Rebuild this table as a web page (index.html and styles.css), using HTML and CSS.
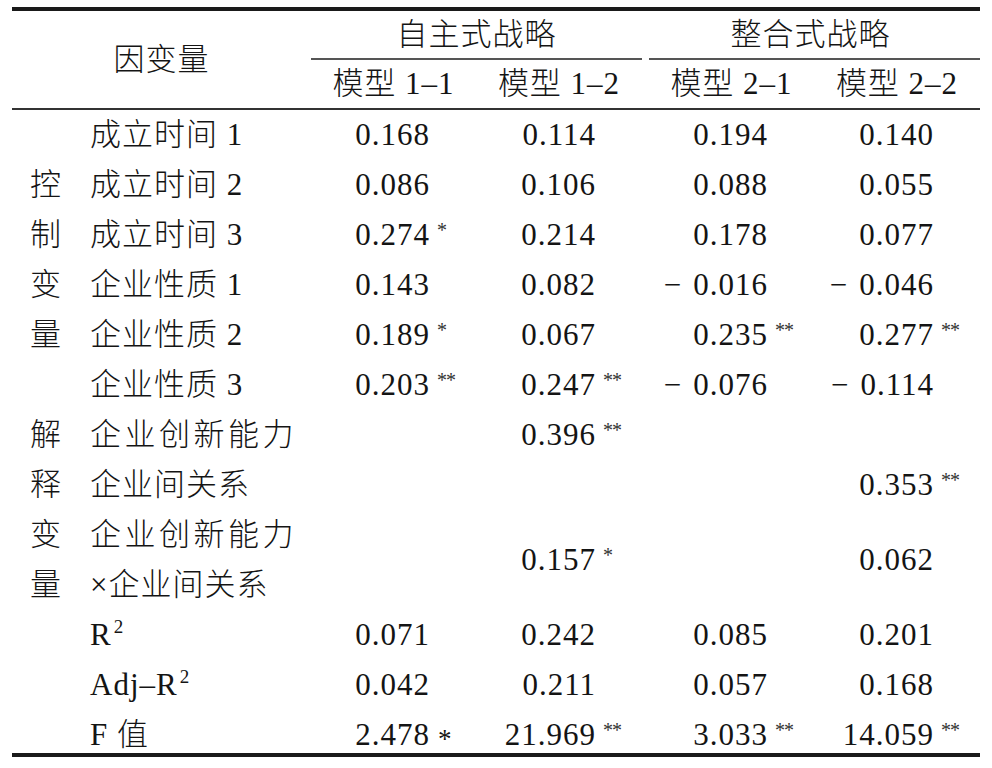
FILE: index.html
```html
<!DOCTYPE html>
<html lang="zh-CN">
<head>
<meta charset="utf-8">
<title>回归分析结果</title>
<link rel="stylesheet" href="styles.css">
</head>
<body>
<table class="reg">
  <colgroup>
    <col class="w-cat"><col class="w-lab"><col class="w-c1"><col class="w-c2"><col class="w-c3"><col class="w-c4">
  </colgroup>
  <thead>
    <tr>
      <th class="dep" rowspan="2" colspan="2">因变量</th>
      <th class="grp" colspan="2"><div class="grp-line">自主式战略</div></th>
      <th class="grp grp-b" colspan="2"><div class="grp-line">整合式战略</div></th>
    </tr>
    <tr>
      <th class="model">模型 1–1</th>
      <th class="model">模型 1–2</th>
      <th class="model model-3">模型 2–1</th>
      <th class="model">模型 2–2</th>
    </tr>
  </thead>
  <tbody>
    <tr>
      <td class="cat" rowspan="6">控<br>制<br>变<br>量</td>
      <td class="lab">成立时间 1</td>
      <td class="num">0.168</td><td class="num">0.114</td><td class="num">0.194</td><td class="num">0.140</td>
    </tr>
    <tr>
      <td class="lab">成立时间 2</td>
      <td class="num">0.086</td><td class="num">0.106</td><td class="num">0.088</td><td class="num">0.055</td>
    </tr>
    <tr>
      <td class="lab">成立时间 3</td>
      <td class="num">0.274<span class="sig"><sup>*</sup></span></td><td class="num">0.214</td><td class="num">0.178</td><td class="num">0.077</td>
    </tr>
    <tr>
      <td class="lab">企业性质 1</td>
      <td class="num">0.143</td><td class="num">0.082</td><td class="num"><span class="neg">−</span>0.016</td><td class="num"><span class="neg">−</span>0.046</td>
    </tr>
    <tr>
      <td class="lab">企业性质 2</td>
      <td class="num">0.189<span class="sig"><sup>*</sup></span></td><td class="num">0.067</td><td class="num">0.235<span class="sig"><sup>**</sup></span></td><td class="num">0.277<span class="sig"><sup>**</sup></span></td>
    </tr>
    <tr>
      <td class="lab">企业性质 3</td>
      <td class="num">0.203<span class="sig"><sup>**</sup></span></td><td class="num">0.247<span class="sig"><sup>**</sup></span></td><td class="num"><span class="neg">−</span>0.076</td><td class="num"><span class="neg">−</span>0.114</td>
    </tr>
    <tr>
      <td class="cat" rowspan="3">解<br>释<br>变<br>量</td>
      <td class="lab"><span class="wide">企业创新能力</span></td>
      <td class="num"></td><td class="num">0.396<span class="sig"><sup>**</sup></span></td><td class="num"></td><td class="num"></td>
    </tr>
    <tr>
      <td class="lab">企业间关系</td>
      <td class="num"></td><td class="num"></td><td class="num"></td><td class="num">0.353<span class="sig"><sup>**</sup></span></td>
    </tr>
    <tr>
      <td class="lab"><span class="wide">企业创新能力</span><br>×企业间关系</td>
      <td class="num"></td><td class="num">0.157<span class="sig"><sup>*</sup></span></td><td class="num"></td><td class="num">0.062</td>
    </tr>
    <tr>
      <td class="cat"></td>
      <td class="lab">R<sup class="pow">2</sup></td>
      <td class="num">0.071</td><td class="num">0.242</td><td class="num">0.085</td><td class="num">0.201</td>
    </tr>
    <tr>
      <td class="cat"></td>
      <td class="lab">Adj–R<sup class="pow">2</sup></td>
      <td class="num">0.042</td><td class="num">0.211</td><td class="num">0.057</td><td class="num">0.168</td>
    </tr>
    <tr class="last">
      <td class="cat"></td>
      <td class="lab">F 值</td>
      <td class="num">2.478<span class="sig"><span class="op">*</span></span></td><td class="num">21.969<span class="sig"><sup>**</sup></span></td><td class="num">3.033<span class="sig"><sup>**</sup></span></td><td class="num">14.059<span class="sig"><sup>**</sup></span></td>
    </tr>
  </tbody>
</table>
</body>
</html>
```

FILE: styles.css
```css
html, body {
  margin: 0;
  padding: 0;
  background: #ffffff;
}

body {
  padding: 7px 12px 0;
}

.reg {
  border-collapse: separate;
  border-spacing: 0;
  table-layout: fixed;
  width: 968px;
  border-top: 4px solid #1a1a1a;
  border-bottom: 4px solid #1a1a1a;
  font-family: "Liberation Serif", "Noto Sans CJK SC", serif;
  font-size: 31px;
  font-weight: 300;
  letter-spacing: 1px;
  color: #141414;
}

.w-cat { width: 68px; }
.w-lab { width: 231px; }
.w-c1 { width: 165px; }
.w-c2 { width: 166px; }
.w-c3 { width: 172px; }
.w-c4 { width: 166px; }

th, td {
  padding: 0;
  font-weight: 300;
  white-space: nowrap;
}

.dep {
  text-align: center;
  vertical-align: middle;
  line-height: 50px;
  border-bottom: 2px solid #333333;
}

.grp {
  vertical-align: bottom;
}

.grp-line {
  line-height: 47px;
  text-align: center;
  border-bottom: 2px solid #555555;
}

.grp-b .grp-line {
  margin-left: 7px;
  padding-right: 8px;
}

.model {
  line-height: 48px;
  text-align: center;
  border-bottom: 2px solid #333333;
}

.model-3 {
  padding-left: 7px;
}

td {
  line-height: 50px;
  vertical-align: middle;
}

.cat {
  text-align: center;
}

.lab {
  text-align: left;
  padding-left: 10px;
}

.wide {
  letter-spacing: 3.5px;
}

.pow {
  font-size: 19px;
  line-height: 0;
  vertical-align: 12px;
  margin-left: 2px;
}

.num {
  text-align: right;
  padding-right: 46px;
}

.neg {
  margin-right: 11px;
}

.sig {
  display: inline-block;
  width: 0;
  text-align: left;
  white-space: nowrap;
}

.sig sup {
  font-size: 20px;
  line-height: 0;
  vertical-align: 8px;
  margin-left: 7px;
  letter-spacing: -1px;
  color: #333333;
}

.sig .op {
  font-size: 27px;
  line-height: 0;
  vertical-align: -3px;
  margin-left: 8px;
  letter-spacing: 0;
}

.last td {
  line-height: 36px;
  padding-top: 7px;
}
```
